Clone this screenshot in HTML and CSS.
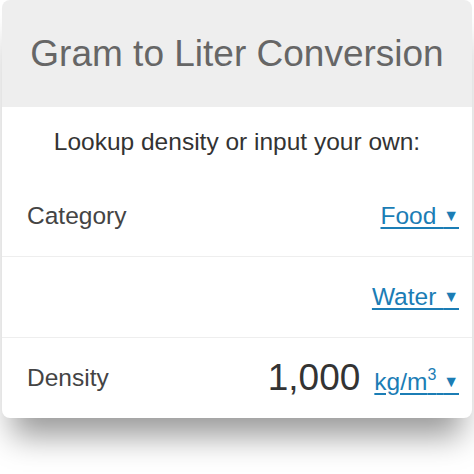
FILE: index.html
```html
<!DOCTYPE html>
<html lang="en">
<head>
    <meta charset="UTF-8">
    <meta name="viewport" content="width=device-width, initial-scale=1.0">
    <title>Gram to Liter Conversion</title>
    <link rel="stylesheet" href="styles.css">
</head>
<body>
    <div class="calculator">
        <div class="title">Gram to Liter Conversion</div>
        <p class="intro">Lookup density or input your own:</p>
        <div class="row first">
            <span class="label">Category</span>
            <a class="select" href="#">Food <span class="arrow">&#9660;</span></a>
        </div>
        <div class="row">
            <span class="label"></span>
            <a class="select" href="#">Water <span class="arrow">&#9660;</span></a>
        </div>
        <div class="row">
            <span class="label">Density</span>
            <div class="value-group">
                <span class="value">1,000</span>
                <a class="select" href="#">kg/m<sup>3</sup> <span class="arrow">&#9660;</span></a>
            </div>
        </div>
    </div>
</body>
</html>
```

FILE: styles.css
```css
body {
    font-family: "Liberation Sans", Arial, sans-serif;
    margin: 0;
    padding: 0 0 60px;
    background-color: #fff;
}
.calculator {
    margin: 0 2px;
    width: 470px;
    background: white;
    border-radius: 8px;
    box-shadow: 0 28px 30px -10px rgba(0, 0, 0, 0.4);
}
.title {
    height: 107px;
    display: flex;
    align-items: center;
    justify-content: center;
    background-color: #eeeeee;
    border-radius: 8px 8px 0 0;
    color: #666;
    font-size: 37px;
}
.intro {
    margin: 0;
    height: 69px;
    display: flex;
    align-items: center;
    justify-content: center;
    color: #333;
    font-size: 24.5px;
}
.row {
    height: 80px;
    display: flex;
    align-items: center;
    justify-content: space-between;
    padding: 0 13px 0 25px;
    border-top: 1px solid #eee;
}
.row.first {
    border-top: none;
}
.label {
    color: #444;
    font-size: 24.5px;
}
.value-group {
    display: flex;
    align-items: baseline;
    gap: 14px;
}
.value {
    color: #333;
    font-size: 37px;
}
.select {
    color: #1b7db5;
    font-size: 24.5px;
    text-decoration: underline;
    text-underline-offset: 3px;
}
.select sup {
    font-size: 16px;
    vertical-align: 10px;
}
.arrow {
    font-size: 16px;
    vertical-align: 3px;
}
```
